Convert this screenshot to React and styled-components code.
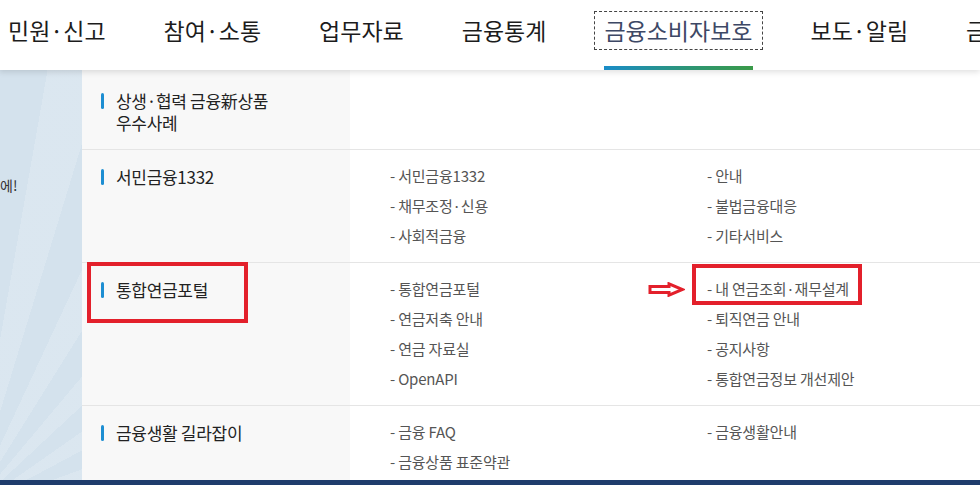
import styled, { createGlobalStyle } from "styled-components"

const Global = createGlobalStyle`
  *, *::before, *::after { box-sizing: border-box; }
  html, body { margin: 0; padding: 0; background: #fff; }
  body {
    font-family: "Noto Sans CJK KR", "Noto Sans", "Liberation Sans", sans-serif;
    color: #222;
  }
  ul { list-style: none; margin: 0; padding: 0; }
`

const Page = styled.div`
  width: 980px;
  height: 485px;
  display: flex;
  flex-direction: column;
  overflow: hidden;
`

const Nav = styled.ul`
  position: relative;
  z-index: 2;
  height: 70px;
  flex: none;
  display: flex;
  gap: 40px;
  margin-left: -1px;
  white-space: nowrap;
  overflow: hidden;
  background: #fff;
  box-shadow: 0 2px 6px rgba(0, 0, 0, 0.13);
`

const NavItem = styled.li`
  display: flex;
  flex-direction: column;
  padding-top: 12px;
  flex: none;
`

const NavLink = styled.a`
  display: block;
  padding: 4px 9px;
  font-size: 23px;
  line-height: 29px;
  color: ${(p) => (p.$active ? "#3d4865" : "#1c1c1c")};
  outline: ${(p) => (p.$active ? "1px dashed #444" : "none")};
`

const Underline = styled.span`
  display: block;
  height: 4px;
  margin: auto 9px 0;
  background: linear-gradient(90deg, #1a8cc8, #2c9577 55%, #3a9a48);
`

const Main = styled.div`
  flex: 1;
  display: flex;
  min-height: 0;
`

const Side = styled.div`
  width: 82px;
  flex: none;
  padding-top: 105px;
  background-color: #d4e2ed;
  background-image: repeating-conic-gradient(
    from 10deg at -30px 440px,
    rgba(255, 255, 255, 0.16) 0deg 7deg,
    rgba(255, 255, 255, 0) 7deg 15deg
  );
`

const SideText = styled.div`
  font-size: 14px;
  line-height: 20px;
  color: #333;
  white-space: nowrap;
`

const Panel = styled.div`
  flex: 1;
  background: #fff;
  overflow: hidden;
`

const Row = styled.div`
  display: grid;
  grid-template-columns: 268px 1fr;
  border-bottom: 1px solid #e5e5e5;
`

const TitleCell = styled.div`
  background: #f8f8f8;
  padding: ${(p) => (p.$first ? "20px 0 15px 19px" : "16px 0 10px 19px")};
`

const Title = styled.div`
  position: relative;
  display: flex;
  align-items: flex-start;
  gap: 12px;
  max-width: 185px;

  ${(p) =>
    p.$marked &&
    `
    &::after {
      content: "";
      position: absolute;
      left: -14px;
      top: -17px;
      width: 161px;
      height: 61px;
      border: 4px solid #e3202b;
    }
  `}
`

const Bar = styled.span`
  flex: none;
  width: 3px;
  height: 16px;
  margin-top: 3px;
  border-radius: 2px;
  background: #1d8ed2;
`

const TitleText = styled.span`
  font-size: 17px;
  line-height: 22px;
  color: #222;
  letter-spacing: -0.3px;
`

const Links = styled.ul`
  display: grid;
  grid-template-columns: 317px 317px;
  align-content: start;
  padding: 11px 0 11px 40px;
`

const LinkItem = styled.li`
  position: relative;
  font-size: 15px;
  line-height: 30px;
  color: #555;
  letter-spacing: -0.2px;

  ${(p) =>
    p.$marked &&
    `
    &::after {
      content: "";
      position: absolute;
      left: -15px;
      top: -10px;
      width: 170px;
      height: 41px;
      border: 4px solid #e3202b;
    }
  `}
`

const ArrowMark = styled.svg`
  position: absolute;
  left: -59px;
  top: 8px;
  width: 37px;
  height: 15px;
`

const FooterBar = styled.div`
  height: 5px;
  flex: none;
  background: #1f3c6c;
`

const menu = ["민원·신고", "참여·소통", "업무자료", "금융통계", "금융소비자보호", "보도·알림", "금감원소개"]

const sections = [
  { title: "상생·협력 금융新상품 우수사례", links: [] },
  {
    title: "서민금융1332",
    links: ["서민금융1332", "안내", "채무조정·신용", "불법금융대응", "사회적금융", "기타서비스"],
  },
  {
    title: "통합연금포털",
    marked: true,
    links: [
      "통합연금포털",
      "내 연금조회·재무설계",
      "연금저축 안내",
      "퇴직연금 안내",
      "연금 자료실",
      "공지사항",
      "OpenAPI",
      "통합연금정보 개선제안",
    ],
    markedLink: "내 연금조회·재무설계",
  },
  { title: "금융생활 길라잡이", links: ["금융 FAQ", "금융생활안내", "금융상품 표준약관"] },
]

function Arrow() {
  return (
    <ArrowMark viewBox="0 0 37 15">
      <path
        d="M2 4.5 H21 V1.8 L34.5 7.5 L21 13.2 V10.5 H2 Z"
        fill="#fff"
        stroke="#e3202b"
        strokeWidth="3"
      />
    </ArrowMark>
  )
}

export default function App() {
  return (
    <>
      <Global />
      <Page>
        <Nav>
          {menu.map((m) => (
            <NavItem key={m}>
              <NavLink $active={m === "금융소비자보호"}>{m}</NavLink>
              {m === "금융소비자보호" && <Underline />}
            </NavItem>
          ))}
        </Nav>

        <Main>
          <Side>
            <SideText>에!</SideText>
          </Side>

          <Panel>
            {sections.map((s, i) => (
              <Row key={s.title}>
                <TitleCell $first={i === 0}>
                  <Title $marked={s.marked}>
                    <Bar />
                    <TitleText>{s.title}</TitleText>
                  </Title>
                </TitleCell>
                <Links>
                  {s.links.map((l) => (
                    <LinkItem key={l} $marked={l === s.markedLink}>
                      - {l}
                      {l === s.markedLink && <Arrow />}
                    </LinkItem>
                  ))}
                </Links>
              </Row>
            ))}
          </Panel>
        </Main>

        <FooterBar />
      </Page>
    </>
  )
}
